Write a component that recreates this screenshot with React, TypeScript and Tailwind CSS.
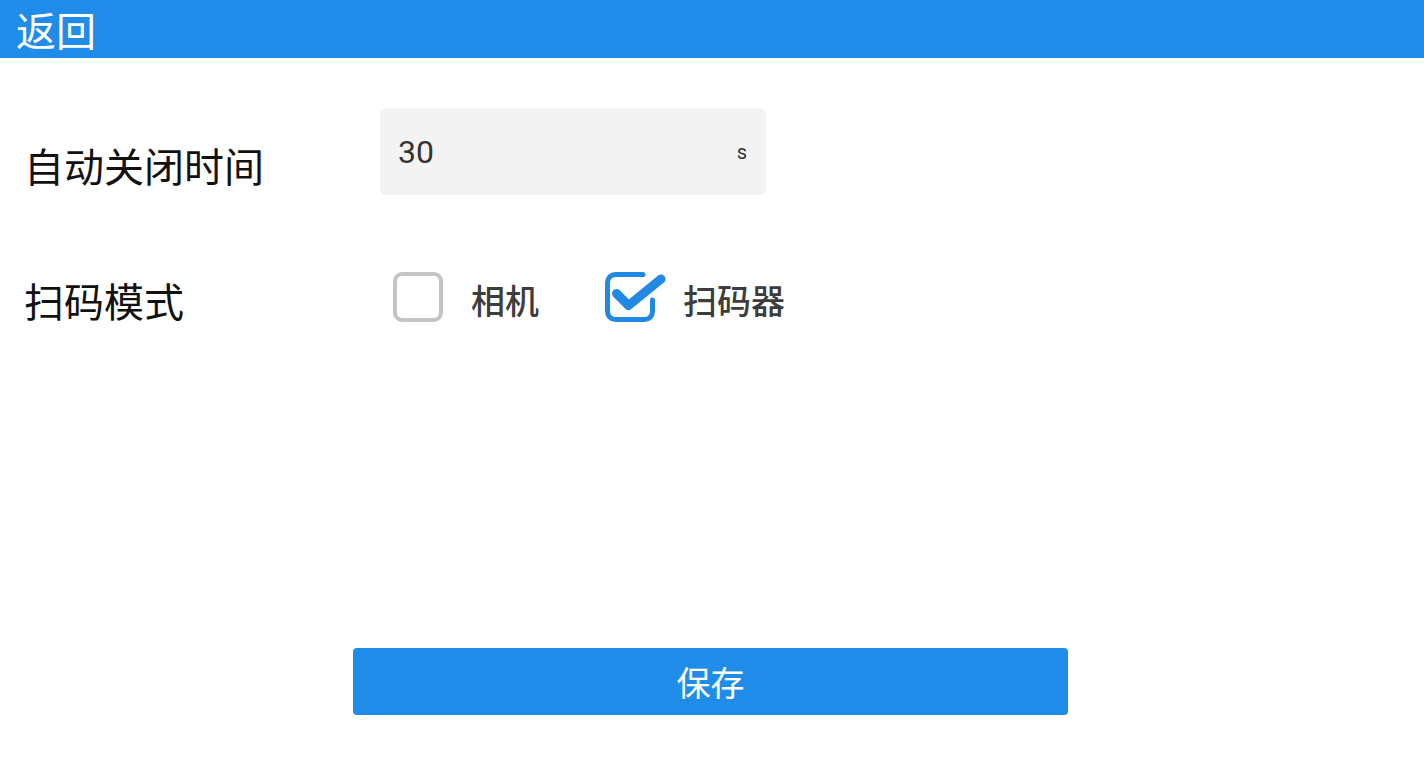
import { useState } from "react";

const cjk = { fontFamily: '"Noto Sans CJK SC", "Noto Sans", sans-serif' };

function CheckedIcon() {
  return (
    <svg width="72" height="62" viewBox="0 0 72 62" className="-ml-[6px] -mt-[6px] -mb-[6px] -mr-[16px]">
      <path
        d="M44 8.5 H16.5 A8 8 0 0 0 8.5 16.5 V45.5 A8 8 0 0 0 16.5 53.5 H45.5 A8 8 0 0 0 53.5 45.5 V34"
        fill="none"
        stroke="#2189e3"
        strokeWidth="5"
        strokeLinecap="round"
      />
      <path
        d="M17.5 27.5 L29.5 39.5 L62 13"
        fill="none"
        stroke="#2189e3"
        strokeWidth="9"
        strokeLinecap="round"
        strokeLinejoin="round"
      />
    </svg>
  );
}

function UncheckedIcon() {
  return <div className="w-[50px] h-[50px] rounded-[9px] border-[4px] border-[#c4c4c4]" />;
}

export default function App() {
  const [mode, setMode] = useState<"camera" | "scanner">("scanner");
  const options: { key: "camera" | "scanner"; label: string }[] = [
    { key: "camera", label: "相机" },
    { key: "scanner", label: "扫码器" },
  ];

  return (
    <div className="w-[1424px] h-[768px] bg-white flex flex-col" style={cjk}>
      <div className="h-[58px] bg-[#1e8ce8] flex items-center px-4">
        <span className="text-white text-[40px] leading-[40px]">返回</span>
      </div>

      <div className="flex items-start mt-[50px] pl-6">
        <div className="w-[356px] mt-[37px] text-[40px] leading-[40px] text-[#111]">自动关闭时间</div>
        <div className="w-[386px] h-[87px] bg-[#f3f3f3] rounded-[6px] flex items-center justify-between pl-[18px] pr-[19px]">
          <span className="text-[32px] text-[#333]" style={{ fontFamily: "Roboto, sans-serif" }}>30</span>
          <span className="text-[20px] text-[#333]" style={{ fontFamily: "Roboto, sans-serif" }}>s</span>
        </div>
      </div>

      <div className="flex items-center mt-[77px] pl-6 h-[50px]">
        <div className="w-[356px] mt-[6px] text-[40px] leading-[40px] text-[#111]">扫码模式</div>
        <div className="flex items-center pl-[13px]">
          {options.map((o, i) => (
            <button
              key={o.key}
              onClick={() => setMode(o.key)}
              className={`flex items-center ${i > 0 ? "ml-[66px]" : ""}`}
            >
              {mode === o.key ? <CheckedIcon /> : <UncheckedIcon />}
              <span className="ml-[28px] mt-[6px] text-[34px] leading-[40px] font-medium text-[#3d3d3d]">{o.label}</span>
            </button>
          ))}
        </div>
      </div>

      <div className="mt-[326px] pl-[353px]">
        <button className="w-[715px] h-[67px] bg-[#1e8ce8] rounded-[4px] text-white text-[34px] leading-[40px]">
          保存
        </button>
      </div>
    </div>
  );
}
